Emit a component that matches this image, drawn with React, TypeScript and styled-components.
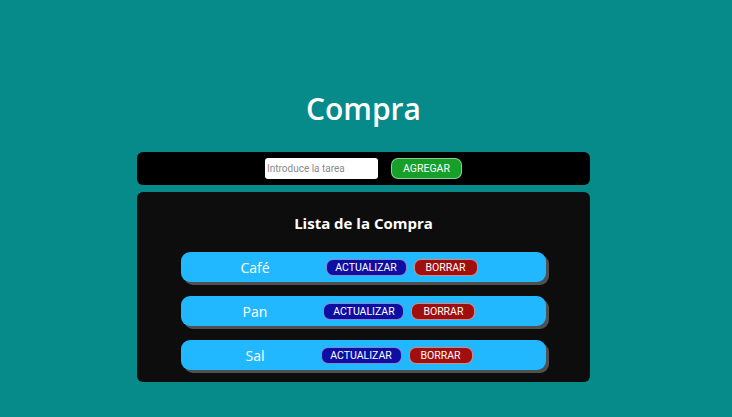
import React, { useState } from "react";
import styled, { createGlobalStyle } from "styled-components";

const GlobalStyle = createGlobalStyle`
  body {
    margin: 0;
    background-color: #068a8a;
    font-family: "Open Sans", "Noto Sans", sans-serif;
  }
`;

const Page = styled.main`
  min-height: 417px;
  padding: 87px 5px 0 0;
  box-sizing: border-box;
  display: flex;
  flex-direction: column;
  align-items: center;
`;

const Title = styled.h1`
  margin: 0 0 22px;
  font-size: 30px;
  line-height: 43px;
  font-weight: 600;
  color: #ffffff;
`;

const Form = styled.form`
  width: 453px;
  height: 33px;
  background-color: #000000;
  border-radius: 6px;
  display: flex;
  justify-content: center;
  align-items: center;
  gap: 13px;
`;

const Input = styled.input`
  width: 113px;
  height: 21px;
  box-sizing: border-box;
  border: none;
  border-radius: 3px;
  padding: 0 2px;
  font-family: Roboto, "Liberation Sans", sans-serif;
  font-size: 10px;
  outline: none;

  &::placeholder {
    color: #8a8a8a;
  }
`;

const Button = styled.button<{ $bg: string; $w: number; $h: number }>`
  width: ${(p) => p.$w}px;
  height: ${(p) => p.$h}px;
  box-sizing: border-box;
  background-color: ${(p) => p.$bg};
  border: 1px solid rgba(255, 255, 255, 0.5);
  border-radius: 7px;
  color: #ffffff;
  font-family: Roboto, "Liberation Sans", sans-serif;
  font-size: 10.5px;
  padding: 0;
  cursor: pointer;
`;

const ListBox = styled.section`
  width: 453px;
  margin-top: 7px;
  padding: 20px 0 12px;
  box-sizing: border-box;
  background-color: #0d0d0d;
  border-radius: 6px;
  display: flex;
  flex-direction: column;
  align-items: center;
`;

const ListTitle = styled.h2`
  margin: 0 0 18px;
  font-size: 15px;
  line-height: 22px;
  font-weight: 700;
  color: #ffffff;
`;

const List = styled.ul`
  list-style: none;
  margin: 0;
  padding: 0;
  display: flex;
  flex-direction: column;
  gap: 14px;
`;

const Row = styled.li`
  width: 365px;
  height: 30px;
  padding-right: 9px;
  box-sizing: border-box;
  background-color: #22b8ff;
  border-radius: 9px;
  box-shadow: 3px 3px 0 #505050;
  display: flex;
  justify-content: center;
  align-items: center;
  gap: 7px;
`;

const ItemName = styled.span`
  margin-right: 49px;
  font-size: 14px;
  color: #ffffff;
`;

const items = ["Café", "Pan", "Sal"];

const App = () => {
  const [task, setTask] = useState("");
  return (
    <>
      <GlobalStyle />
      <Page>
        <Title>Compra</Title>
        <Form onSubmit={(e) => e.preventDefault()}>
          <Input
            placeholder="Introduce la tarea"
            value={task}
            onChange={(e) => setTask(e.target.value)}
          />
          <Button type="submit" $bg="#16a02a" $w={71} $h={21}>
            AGREGAR
          </Button>
        </Form>
        <ListBox>
          <ListTitle>Lista de la Compra</ListTitle>
          <List>
            {items.map((item) => (
              <Row key={item}>
                <ItemName>{item}</ItemName>
                <Button type="button" $bg="#0e0ea3" $w={81} $h={17}>
                  ACTUALIZAR
                </Button>
                <Button type="button" $bg="#a00e0e" $w={64} $h={17}>
                  BORRAR
                </Button>
              </Row>
            ))}
          </List>
        </ListBox>
      </Page>
    </>
  );
};

export default App;
